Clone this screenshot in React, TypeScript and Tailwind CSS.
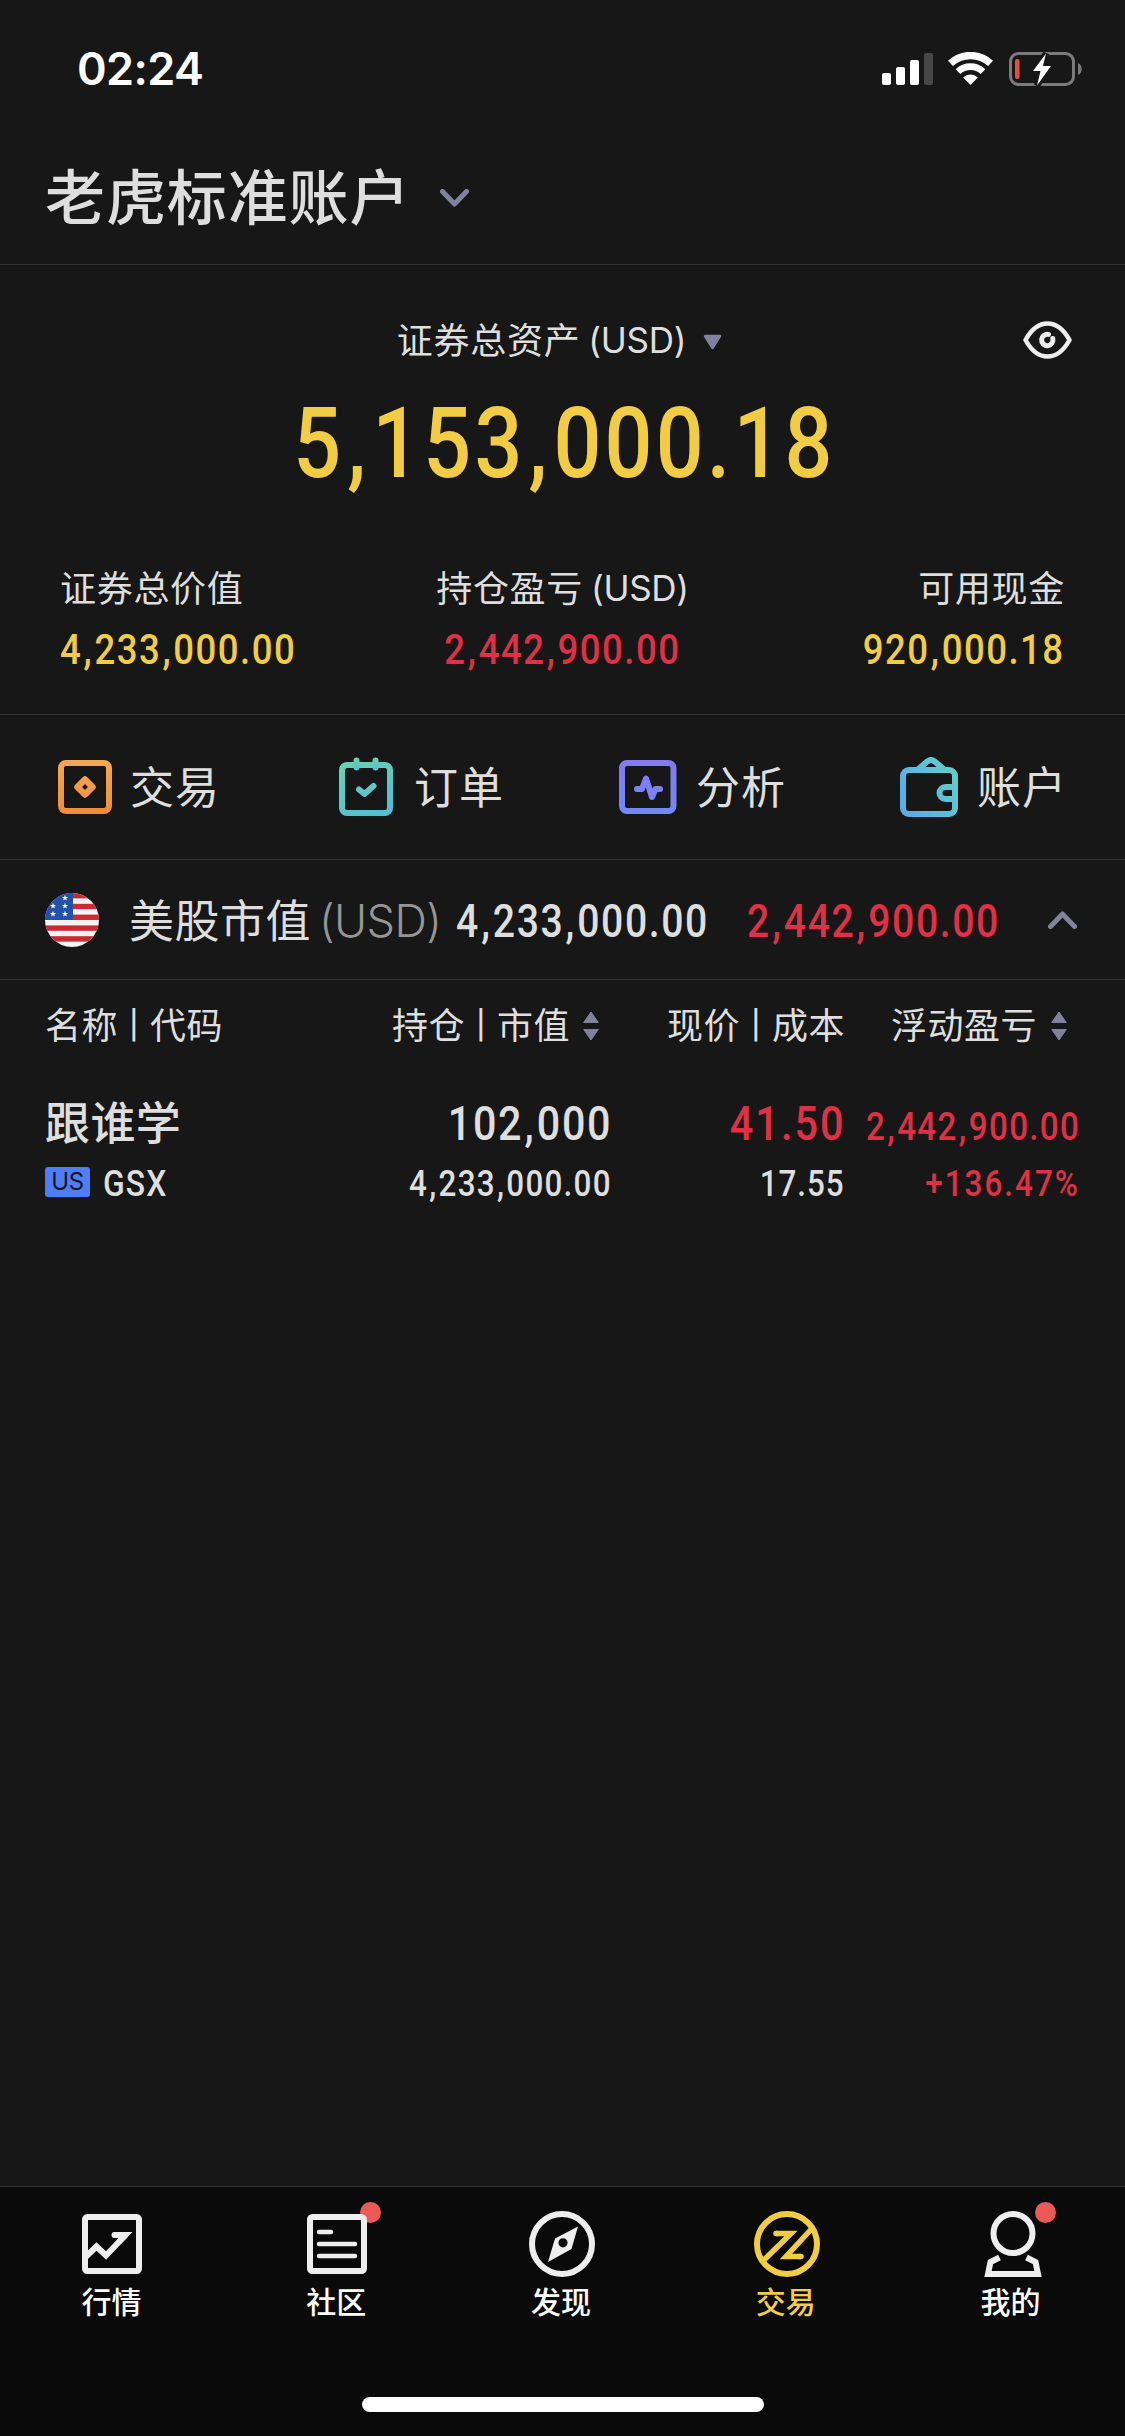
import { Fragment, type ReactNode } from "react";
import clsx from "clsx";

// digits are squeezed a little, commas get some air on both sides
function Num({ children, className }: { children: string; className?: string }) {
  const parts = children.split(",");
  return (
    <span
      className={clsx(
        "inline-block scale-x-[0.86] font-['Roboto','Liberation_Sans',sans-serif] leading-none font-medium whitespace-nowrap",
        className,
      )}
    >
      {parts.map((part, i) => (
        <Fragment key={i}>
          {i > 0 && <span className="px-[0.035em]">,</span>}
          {part}
        </Fragment>
      ))}
    </span>
  );
}

function StatusBar() {
  return (
    <div className="flex h-[132px] items-start pt-[46px] pr-[43px] pl-[77px]">
      <span className="text-[45px] leading-none font-semibold tracking-[-0.6px] text-white">02:24</span>
      <div className="mt-1.5 ml-auto flex items-start">
        <svg width="51" height="34" viewBox="0 0 51 34" fill="#fff">
          <rect x="0" y="21" width="9" height="12" rx="2" />
          <rect x="14" y="15" width="9" height="18" rx="2" />
          <rect x="28" y="8" width="9" height="25" rx="2" />
          <rect x="42" y="1" width="9" height="32" rx="2" fill="#474747" />
        </svg>
        <svg width="45" height="34" viewBox="0 0 45 34" className="ml-[15px]">
          <g fill="none" stroke="#fff">
            <path d="M2.4 11.4A29.5 29.5 0 0 1 42.6 11.4" strokeWidth="7.3" />
            <path d="M10 19.6A18.3 18.3 0 0 1 35 19.6" strokeWidth="6.7" />
          </g>
          <path d="M22.5 33 15.2 25.4A10.7 10.7 0 0 1 29.8 25.4Z" fill="#fff" />
        </svg>
        <svg width="73" height="34" viewBox="0 0 73 34" className="ml-4">
          <rect x="1.5" y="1.5" width="63" height="31" rx="8" fill="none" stroke="#7b7b7b" strokeWidth="3" />
          <path d="M69 11c5 2 5 10 0 12z" fill="#7b7b7b" />
          <rect x="6" y="7" width="4.5" height="20" rx="2" fill="#ec4c40" />
          <path
            d="M37 1.5 24 19h7.5L28 33.5 42 14h-8z"
            fill="#fff"
            stroke="#171717"
            strokeWidth="6"
            paintOrder="stroke"
          />
        </svg>
      </div>
    </div>
  );
}

function Chevron({ up }: { up?: boolean }) {
  return (
    <svg width="29" height="18" viewBox="0 0 29 18" className={clsx(up && "rotate-180")}>
      <path
        d="M2.5 2.5 14.5 15 26.5 2.5"
        fill="none"
        stroke="#82829f"
        strokeWidth="5"
        strokeLinecap="round"
        strokeLinejoin="round"
      />
    </svg>
  );
}

function SortIcon() {
  return (
    <svg width="16" height="30" viewBox="0 0 16 30" fill="#82829f" stroke="#82829f" strokeLinejoin="round">
      <path d="M8 1 15.3 11.5H.7z" />
      <path d="M8 29 15.3 18.5H.7z" />
    </svg>
  );
}

function EyeIcon() {
  return (
    <svg width="49" height="38" viewBox="0 0 49 38" fill="none" stroke="#eee">
      <path
        d="M2.5 19C8 9 16 2.5 24.5 2.5S41 9 46.5 19C41 29 33 35.5 24.5 35.5S8 29 2.5 19Z"
        strokeWidth="4.5"
        strokeLinejoin="round"
      />
      <path d="M29.8 17.5A5.7 5.7 0 1 1 25.5 13.4" strokeWidth="5" strokeLinecap="round" />
    </svg>
  );
}

function Header() {
  return (
    <div className="flex h-[133px] items-center border-b border-[#333] pl-[45px]">
      <h1 className="w-[395px] text-[60px] leading-none font-medium tracking-[0.9px]">老虎标准账户</h1>
      <Chevron />
    </div>
  );
}

function Label({ children, unit }: { children: string; unit?: string }) {
  return (
    <span className="flex items-center text-[36px] leading-none whitespace-nowrap">
      <span className="pt-[3px] tracking-[0.7px]">{children}</span>
      {unit && <span className="ml-[8px] pt-px text-[35px] tracking-[-0.3px]">({unit})</span>}
    </span>
  );
}

type StatProps = {
  label: string;
  unit?: string;
  value: string;
  className: string;
  numClass: string;
};

function Stat({ label, unit, value, className, numClass }: StatProps) {
  return (
    <div className={clsx("flex w-[335px] flex-col gap-[22px]", className)}>
      <Label unit={unit}>{label}</Label>
      <Num className={clsx("text-[42.5px] tracking-[0.04em]", numClass)}>{value}</Num>
    </div>
  );
}

function Summary() {
  return (
    <div className="h-[450px] border-b border-[#333]">
      <div className="grid grid-cols-[1fr_auto_1fr] items-center pt-[55px] pr-[53px] pl-[47px]">
        <span />
        <div className="flex items-center">
          <Label unit="USD">证券总资产</Label>
          <svg width="19" height="16" viewBox="0 0 19 16" className="mt-1 ml-[17px]">
            <path d="M2 2H17L9.5 14z" fill="#82829f" stroke="#82829f" strokeWidth="2.5" strokeLinejoin="round" />
          </svg>
        </div>
        <div className="flex justify-end">
          <EyeIcon />
        </div>
      </div>
      <div className="mt-[36px] flex justify-center pl-[3px]">
        <Num className="text-[98px] tracking-[0.038em] text-[#f1cd44]">5,153,000.18</Num>
      </div>
      <div className="mt-[75px] flex justify-between px-[60px]">
        <Stat label="证券总价值" value="4,233,000.00" className="items-start" numClass="origin-left text-[#f1cd44]" />
        <Stat label="持仓盈亏" unit="USD" value="2,442,900.00" className="items-center" numClass="text-[#e02f46]" />
        <Stat label="可用现金" value="920,000.18" className="items-end" numClass="origin-right text-[#f1cd44]" />
      </div>
    </div>
  );
}

function TradeIcon() {
  return (
    <svg width="54" height="60" viewBox="0 -3 54 60" fill="none" stroke="url(#trade)" strokeWidth="6">
      <defs>
        <linearGradient id="trade" gradientUnits="userSpaceOnUse" x1="0" y1="0" x2="0" y2="54">
          <stop stopColor="#f4a951" />
          <stop offset="1" stopColor="#f08c39" />
        </linearGradient>
      </defs>
      <rect x="3" y="3" width="48" height="48" rx="5" />
      <path d="M27 19.5 34.5 27 27 34.5 19.5 27Z" strokeWidth="6.5" strokeLinejoin="round" />
    </svg>
  );
}

function OrderIcon() {
  return (
    <svg width="54" height="60" viewBox="0 -1 54 60" fill="none" stroke="url(#order)" strokeWidth="6" strokeLinecap="round">
      <defs>
        <linearGradient id="order" gradientUnits="userSpaceOnUse" x1="10" y1="0" x2="40" y2="58">
          <stop stopColor="#67d4ae" />
          <stop offset="1" stopColor="#56bcd6" />
        </linearGradient>
        <linearGradient id="peg" gradientUnits="userSpaceOnUse" x1="0" y1="0" x2="0" y2="13">
          <stop stopColor="#67d4ae" />
          <stop offset="1" stopColor="#56bcd6" />
        </linearGradient>
      </defs>
      <rect x="3" y="7" width="48" height="48" rx="5" />
      <path d="M17.5 2.5v7M36.5 2.5v7" stroke="url(#peg)" />
      <path d="M20 31.5 25.5 36 34.5 28" strokeLinejoin="round" />
    </svg>
  );
}

function AnalysisIcon() {
  return (
    <svg width="58" height="60" viewBox="0 -3 58 60" fill="none" stroke="url(#analysis)" strokeWidth="6">
      <defs>
        <linearGradient id="analysis" gradientUnits="userSpaceOnUse" x1="0" y1="0" x2="0" y2="54">
          <stop stopColor="#8678f2" />
          <stop offset="1" stopColor="#7289f8" />
        </linearGradient>
      </defs>
      <rect x="3" y="3" width="51.5" height="48" rx="5" />
      <path d="M18 29H23L27 18.5 33 37 36.5 29H41" strokeLinecap="round" strokeLinejoin="round" />
    </svg>
  );
}

function WalletIcon() {
  return (
    <svg width="58" height="60" viewBox="0 0 58 60" fill="none" stroke="url(#wallet)" strokeWidth="6">
      <defs>
        <linearGradient id="wallet" gradientUnits="userSpaceOnUse" x1="6" y1="50" x2="56" y2="20">
          <stop stopColor="#58adea" />
          <stop offset="1" stopColor="#61cdcb" />
        </linearGradient>
      </defs>
      <rect x="3" y="13" width="52" height="44" rx="6" />
      <path d="M18.5 12 27.5 4.3Q31 1.7 34.5 4.3L43.5 12" />
      <path d="M55 30H45.5A6 6 0 0 0 45.5 42H55" />
    </svg>
  );
}

function MenuItem({ icon, label, className }: { icon: ReactNode; label: string; className?: string }) {
  return (
    <div className={clsx("flex items-center", className)}>
      {icon}
      <span className="pt-0.5 text-[44px] leading-none tracking-[1px]">{label}</span>
    </div>
  );
}

function Menu() {
  return (
    <div className="flex h-[145px] items-center border-b border-[#333] pl-[58px]">
      <MenuItem className="w-[281px] gap-[18px]" icon={<TradeIcon />} label="交易" />
      <MenuItem className="w-[280px] gap-[21px]" icon={<OrderIcon />} label="订单" />
      <MenuItem className="w-[281px] gap-[19px]" icon={<AnalysisIcon />} label="分析" />
      <MenuItem className="gap-[19px]" icon={<WalletIcon />} label="账户" />
    </div>
  );
}

const stars = [
  [20, 5],
  [8, 13],
  [20, 13],
  [8, 21],
  [20, 21],
];

function FlagIcon() {
  return (
    <svg width="54" height="54" viewBox="0 0 54 54">
      <clipPath id="flag">
        <circle cx="27" cy="27" r="27" />
      </clipPath>
      <g clipPath="url(#flag)">
        <rect width="54" height="54" fill="#f4f4f4" />
        {[0, 10.8, 21.6, 32.4, 43.2].map((y) => (
          <rect key={y} y={y} width="54" height="5.4" fill="#cb2a33" />
        ))}
        <rect width="28" height="27" fill="#2451ab" />
        {stars.map(([x, y]) => (
          <path
            key={`${x}-${y}`}
            transform={`translate(${x} ${y})`}
            d="M0-3.2.8-1H3.1L1.2.4 1.9 2.6 0 1.3-1.9 2.6-1.2.4-3.1-1H-.8Z"
            fill="#fff"
          />
        ))}
      </g>
    </svg>
  );
}

function MarketRow() {
  return (
    <div className="flex h-[120px] items-center border-b border-[#333] pr-12 pl-[45px]">
      <div className="w-[84px]">
        <FlagIcon />
      </div>
      <span className="w-[190px] pt-[3px] text-[45px] leading-none tracking-[0.5px] whitespace-nowrap">美股市值</span>
      <span className="w-[137px] pt-0.5 text-[45px] leading-none font-[350] tracking-[-0.6px] text-[#969696]">(USD)</span>
      <div className="mt-[5px] flex w-[291px]">
        <Num className="origin-left text-[45.5px] tracking-[0.04em]">4,233,000.00</Num>
      </div>
      <div className="mt-[5px] flex w-[290px]">
        <Num className="origin-left text-[45.5px] tracking-[0.04em] text-[#e02f46]">2,442,900.00</Num>
      </div>
      <div className="ml-auto">
        <Chevron up />
      </div>
    </div>
  );
}

function ColumnTitle({ children }: { children: string }) {
  const [first, second] = children.split(" | ");
  return (
    <span className="flex items-center">
      {first}
      {second && (
        <>
          <span className="flex w-8 justify-center pb-0.5 text-[28px] font-medium">|</span>
          {second}
        </>
      )}
    </span>
  );
}

const cols = "grid grid-cols-[305px_262px_233px_235px] px-[45px] whitespace-nowrap";

function Positions() {
  return (
    <div className="flex-1">
      <div className={clsx(cols, "h-[92px] items-center text-[36px] leading-none tracking-[0.5px]")}>
        <ColumnTitle>名称 | 代码</ColumnTitle>
        <div className="flex items-center justify-end gap-[13px] pr-[13px]">
          <ColumnTitle>持仓 | 市值</ColumnTitle>
          <SortIcon />
        </div>
        <div className="flex justify-end">
          <ColumnTitle>现价 | 成本</ColumnTitle>
        </div>
        <div className="flex items-center justify-end gap-[14px] pr-[13px]">
          <ColumnTitle>浮动盈亏</ColumnTitle>
          <SortIcon />
        </div>
      </div>
      <div className={clsx(cols, "mt-[28px] h-[48px] items-baseline")}>
        <span className="text-[45px] leading-none font-medium tracking-[0.4px]">跟谁学</span>
        <div className="flex justify-end">
          <Num className="origin-right text-[48px] tracking-[0.04em]">102,000</Num>
        </div>
        <div className="flex justify-end">
          <Num className="origin-right text-[48px] tracking-[0.05em] text-[#e02f46]">41.50</Num>
        </div>
        <div className="flex justify-end">
          <Num className="origin-right text-[38.5px] tracking-[0.041em] text-[#e02f46]">2,442,900.00</Num>
        </div>
      </div>
      <div className={clsx(cols, "mt-[16px] h-[38px] items-center")}>
        <div className="flex items-center gap-[13px]">
          <span className="mb-0.5 flex h-[30px] w-[45px] items-center justify-center rounded-[3px] bg-[#4f7cf9] text-[24px] leading-none tracking-[-0.5px] text-[#171717]">
            US
          </span>
          <Num className="mt-px origin-left text-[37px] tracking-[0.036em]">GSX</Num>
        </div>
        <div className="flex justify-end pt-0.5">
          <Num className="origin-right text-[36.5px] tracking-[0.04em]">4,233,000.00</Num>
        </div>
        <div className="flex justify-end pt-0.5">
          <Num className="origin-right text-[36.5px] tracking-[0.03em]">17.55</Num>
        </div>
        <div className="flex justify-end pt-0.5">
          <Num className="origin-right text-[36.5px] tracking-[0.065em] text-[#e02f46]">+136.47%</Num>
        </div>
      </div>
    </div>
  );
}

const tabs = [
  {
    label: "行情",
    icon: (
      <>
        <rect x="6" y="6" width="54" height="54" rx="2.5" />
        <path d="M6 46.5 17.5 35.5 27 44.5 46.5 24" />
        <path d="M35.5 24H46.5L40 30.8" />
        <path d="M35.5 24h1" strokeLinecap="round" />
      </>
    ),
  },
  {
    label: "社区",
    dot: true,
    icon: (
      <>
        <rect x="6" y="6" width="54" height="54" rx="2.5" />
        <path d="M15 21H27M15 33H51M15 45H51" strokeWidth="4.5" strokeLinecap="round" />
      </>
    ),
  },
  {
    label: "发现",
    icon: (
      <>
        <circle cx="33" cy="33" r="30" />
        <path
          d="M49 15.5 42.5 38 19 51 26 27.5Z M34 27.2A4.6 4.6 0 1 0 34 36.4A4.6 4.6 0 1 0 34 27.2Z"
          fill="currentColor"
          fillRule="evenodd"
          stroke="none"
        />
      </>
    ),
  },
  {
    label: "交易",
    active: true,
    icon: (
      <>
        <circle cx="33" cy="33" r="30" />
        <path d="M22 22.5H37L9.5 49.5M46.5 45.5H32L57.5 18" strokeWidth="5.5" />
        <path d="M22 22.5h1M46 45.5h1" strokeWidth="5.5" strokeLinecap="round" />
      </>
    ),
  },
  {
    label: "我的",
    dot: true,
    icon: (
      <>
        <circle cx="34" cy="22.5" r="19.5" />
        <path d="M20.5 46.5 11.5 51 9 63H59L56.5 51 47.5 46.5" />
      </>
    ),
  },
];

function TabBar() {
  return (
    <div className="h-[250px] border-t border-[#333] bg-[#0a0a0a]">
      <div className="grid grid-cols-5 pt-6 pr-px">
        {tabs.map((tab) => (
          <div
            key={tab.label}
            className={clsx("flex flex-col items-center", tab.active ? "text-[#f1cd44]" : "text-[#eee]")}
          >
            <div className="relative">
              {tab.dot && <span className="absolute -top-[9px] left-[56px] size-[21px] rounded-full bg-[#eb5a56]" />}
              <svg
                width="66"
                height="66"
                viewBox="0 0 66 66"
                fill="none"
                stroke="currentColor"
                strokeWidth="6"
                className="relative"
              >
                {tab.icon}
              </svg>
            </div>
            <span className={clsx("mt-[10px] pr-0.5 text-[30px] leading-none font-medium", !tab.active && "text-white")}>
              {tab.label}
            </span>
          </div>
        ))}
      </div>
      <div className="mx-auto mt-[80px] h-[15px] w-[402px] rounded-full bg-white" />
    </div>
  );
}

export default function App() {
  return (
    <div className="flex h-[2436px] w-[1125px] flex-col overflow-hidden bg-[#171717] font-['Inter','Noto_Sans_CJK_SC',sans-serif] text-[#dedede]">
      <StatusBar />
      <Header />
      <Summary />
      <Menu />
      <MarketRow />
      <Positions />
      <TabBar />
    </div>
  );
}
